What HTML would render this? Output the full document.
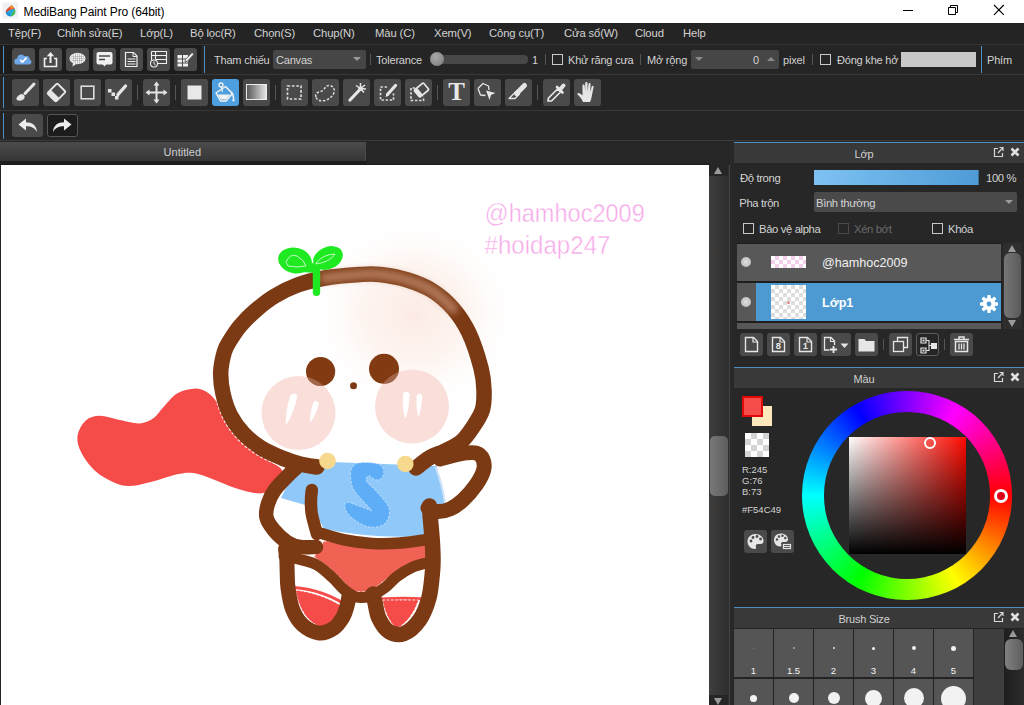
<!DOCTYPE html>
<html><head><meta charset="utf-8">
<style>
*{box-sizing:border-box;margin:0;padding:0}
html,body{width:1024px;height:705px;overflow:hidden;background:#252525;font-family:"Liberation Sans",sans-serif;}
.a{position:absolute}
#title{left:0;top:0;width:1024px;height:23px;background:#fff}
#title .t{left:23.500px;top:4.600px;font-size:12px;color:#000;letter-spacing:-0.12px}
#menu{left:0;top:23px;width:1024px;height:22px;background:#242424}
#menu span{position:absolute;top:4.200px;font-size:11.300px;color:#d2d2d2;white-space:nowrap;letter-spacing:-0.15px}
.btn{position:absolute;background:#4a4a4a;border-radius:3px}
.btn svg{position:absolute;left:0;top:0}
.b1{width:23px;height:23px;top:48px}
.b2{width:27px;height:27px;top:79px}
.lbl{position:absolute;font-size:11px;color:#d2d2d2;white-space:nowrap;letter-spacing:-0.2px}
.sep{position:absolute;width:1px;background:#555}
.hl{position:absolute;left:0;width:1024px;height:1px}
.cb{position:absolute;width:11px;height:11px;border:1px solid #c8c8c8;background:#262626}
</style></head><body>
<div id="title" class="a">
<svg class="a" style="left:2px;top:2px" width="18" height="18" viewBox="0 0 18 18"><defs><linearGradient id="lg1" x1="0" y1="0" x2="1" y2="1"><stop offset="0" stop-color="#ee3b2b"/><stop offset=".35" stop-color="#f08a2a"/><stop offset=".36" stop-color="#2fa7e0"/><stop offset=".6" stop-color="#22b9c9"/><stop offset=".8" stop-color="#3fc04a"/><stop offset="1" stop-color="#8ad03a"/></linearGradient><clipPath id="lc"><path d="M9.500 3C11 4.500 13.500 6.500 13.300 9.800 13 12.800 11 14.200 8.500 14.200 5.800 14.200 3.800 12.500 3.800 10 3.800 7 7.500 5.500 9.500 3Z"/></clipPath></defs><rect x=".5" y=".5" width="15.500" height="16" fill="#f1f1f5"/><g clip-path="url(#lc)"><rect width="18" height="18" fill="#2aa8dc"/><path d="M3 12C6 8 9 7 14 7L14 2 3 2Z" fill="#ef4a2c"/><path d="M7 2L12 2 12 6 9 7Z" fill="#f29a2e"/><path d="M14 6C11 9 10 12 8 15L15 15Z" fill="#3dbf4c"/><path d="M3 10C6 10 9 12 10 15L3 15Z" fill="#1f8fd6"/></g></svg>
<span class="a t">MediBang Paint Pro (64bit)</span>
<svg class="a" style="left:900px;top:0" width="124" height="23" viewBox="0 0 124 23"><path d="M3 10.500h10" stroke="#000" stroke-width="1" fill="none"/><path d="M48.500 7.500h7v7h-7zM50.500 7.500v-2h7v7h-2" stroke="#000" stroke-width="1" fill="none"/><path d="M94 5l9.800 9.800M103.800 5l-9.800 9.800" stroke="#000" stroke-width="1.100" fill="none"/></svg>
</div>
<div id="menu" class="a">
<span style="left:8px">Tệp(F)</span><span style="left:57px">Chỉnh sửa(E)</span><span style="left:140px">Lớp(L)</span><span style="left:190px">Bộ lọc(R)</span><span style="left:254px">Chọn(S)</span><span style="left:313px">Chụp(N)</span><span style="left:375px">Màu (C)</span><span style="left:434px">Xem(V)</span><span style="left:489px">Công cụ(T)</span><span style="left:564px">Cửa sổ(W)</span><span style="left:635px">Cloud</span><span style="left:683px">Help</span>
</div>
<!-- TOOLBARS -->
<div class="a" style="left:0;top:45px;width:1024px;height:96px;background:#252525"></div>
<div class="a" style="left:0;top:45px;width:201px;height:29px;background:#1c1c1c"></div>
<div class="hl" style="top:44px;background:#333"></div>
<div class="hl" style="top:74px;background:#383838"></div>
<div class="hl" style="top:110px;background:#383838"></div>
<div class="hl" style="top:140px;background:#3a3a3a"></div>
<div class="a" style="left:3px;top:46px;width:1px;height:27px;background:#4d8fc4"></div>
<div class="a" style="left:3px;top:77px;width:1px;height:31px;background:#4d8fc4"></div>
<div class="a" style="left:3px;top:113px;width:1px;height:26px;background:#4d8fc4"></div>
<div class="a" style="left:204px;top:46px;width:1px;height:27px;background:#4d8fc4"></div>
<div class="a" style="left:981px;top:46px;width:1px;height:27px;background:#4d8fc4"></div>
<!-- tb1 buttons -->
<div class="btn b1" style="left:12px"><svg width="23" height="23" viewBox="0 0 23 23"><path d="M5.500 16.500a3 3 0 0 1-.3-6 4 4 0 0 1 7.300-2.300 3.600 3.600 0 0 1 5.300 3.300 2.600 2.600 0 0 1-.5 5z" fill="#6ea6e6"/><path d="M8.200 11.800l2.300 2.200 4-4.300" stroke="#fff" stroke-width="1.700" fill="none"/></svg></div>
<div class="btn b1" style="left:39px"><svg width="23" height="23" viewBox="0 0 23 23"><path d="M8 10.500h-2.500v8h12v-8h-2.500" stroke="#f0f0f0" stroke-width="1.600" fill="none"/><path d="M11.500 15v-8" stroke="#f0f0f0" stroke-width="2" fill="none"/><path d="M7.800 8.300l3.700-4.300 3.700 4.300z" fill="#f0f0f0"/></svg></div>
<div class="btn b1" style="left:66px"><svg width="23" height="23" viewBox="0 0 23 23"><ellipse cx="11.500" cy="10.500" rx="8" ry="5.800" fill="#f0f0f0"/><path d="M7 14.500l-.5 4 4.500-3z" fill="#f0f0f0"/><path d="M5 8.500h13M4 10.500h15M5 12.500h13M7.500 6v9M9.500 5v11M11.500 5v11M13.500 5v11M15.500 6v9" stroke="#9a9a9a" stroke-width=".5" fill="none"/></svg></div>
<div class="btn b1" style="left:93px"><svg width="23" height="23" viewBox="0 0 23 23"><rect x="3.500" y="4" width="16" height="12.500" rx="2" fill="#f0f0f0"/><path d="M9.500 16l2 2.500 2-2.500z" fill="#f0f0f0"/><path d="M6 8h11M6 11.500h6" stroke="#4a4a4a" stroke-width="1.600" fill="none"/></svg></div>
<div class="btn b1" style="left:120px"><svg width="23" height="23" viewBox="0 0 23 23"><path d="M5.500 4.500h8l3.500 3.500v10.500h-11.500z" stroke="#f0f0f0" stroke-width="1.200" fill="none"/><path d="M13 4.500v4h4" stroke="#f0f0f0" stroke-width="1" fill="none"/><path d="M7.500 11h8M7.500 13.500h8M7.500 16h8" stroke="#f0f0f0" stroke-width="1.100" fill="none"/></svg></div>
<div class="btn b1" style="left:147px"><svg width="23" height="23" viewBox="0 0 23 23"><path d="M4.500 3.500h15v12h-9M4.500 3.500v8.500M4.500 7.500h15M8.500 3.500v8M9 11.500h10.500" stroke="#f0f0f0" stroke-width="1.100" fill="none"/><circle cx="7" cy="15.500" r="3.500" stroke="#f0f0f0" stroke-width="1.100" fill="#4a4a4a"/><path d="M7 13.500v2.200l1.500 1" stroke="#f0f0f0" stroke-width="1" fill="none"/></svg></div>
<div class="btn b1" style="left:174px"><svg width="23" height="23" viewBox="0 0 23 23"><path d="M3.500 7h4.500v3.500h-4.500zM9 7h5v3.500h-5zM3.500 11.500h4.500v3h-4.500zM9 11.500h5v3h-5zM3.500 15.500h4.500v3h-4.500zM9 15.500h5v3h-5z" fill="#f0f0f0"/><path d="M11.500 11.500l6.500-7 2 1.700-6.500 7-2.500.8z" fill="#f0f0f0" stroke="#4a4a4a" stroke-width=".8"/></svg></div>
<!-- tb1 option widgets -->
<span class="lbl" style="left:214px;top:54px">Tham chiếu</span>
<div class="a" style="left:273px;top:50px;width:93px;height:19px;background:#464646;border-radius:2px"></div>
<span class="lbl" style="left:276px;top:54px">Canvas</span>
<div class="a" style="left:353px;top:57px;width:0;height:0;border-left:4px solid transparent;border-right:4px solid transparent;border-top:4px solid #9a9a9a"></div>
<div class="sep" style="left:370px;top:54px;height:11px"></div>
<span class="lbl" style="left:376px;top:54px">Tolerance</span>
<div class="a" style="left:432px;top:55px;width:96px;height:9px;background:#474747;border-radius:4px"></div>
<div class="a" style="left:430px;top:52px;width:14px;height:14px;background:radial-gradient(circle at 40% 35%,#a8a8a8,#7a7a7a);border-radius:7px"></div>
<span class="lbl" style="left:532px;top:54px">1</span>
<div class="sep" style="left:545px;top:54px;height:11px"></div>
<div class="cb" style="left:552px;top:54px"></div>
<span class="lbl" style="left:568px;top:54px">Khử răng cưa</span>
<div class="sep" style="left:640px;top:54px;height:11px"></div>
<span class="lbl" style="left:647px;top:54px">Mở rộng</span>
<div class="a" style="left:691px;top:50px;width:88px;height:19px;background:#464646;border-radius:2px"></div>
<div class="a" style="left:695px;top:57px;width:0;height:0;border-left:4px solid transparent;border-right:4px solid transparent;border-top:4px solid #8a8a8a"></div>
<div class="a" style="left:767px;top:57px;width:0;height:0;border-left:4px solid transparent;border-right:4px solid transparent;border-bottom:4px solid #8a8a8a"></div>
<span class="lbl" style="left:753px;top:54px">0</span>
<span class="lbl" style="left:783px;top:54px">pixel</span>
<div class="sep" style="left:812px;top:54px;height:11px"></div>
<div class="cb" style="left:820px;top:54px"></div>
<span class="lbl" style="left:837px;top:54px">Đóng khe hở</span>
<div class="a" style="left:901px;top:52px;width:75px;height:15px;background:#c8c8c8"></div>
<span class="lbl" style="left:987px;top:54px">Phím</span>
<!-- tb2 buttons -->
<div class="btn b2" style="left:12px"><svg width="27" height="27" viewBox="0 0 27 27"><path d="M13 14.500l9-9.500" stroke="#e6e6e6" stroke-width="3" stroke-linecap="round" fill="none"/><path d="M4.500 20.500c-.5-2 2-5 5.500-5.500 2 .5 3 2 2.500 4-1.500 3-6 3.500-8 1.500z" fill="#e6e6e6"/></svg></div>
<div class="btn b2" style="left:43px"><svg width="27" height="27" viewBox="0 0 27 27"><g transform="rotate(-45 13.500 13.500)"><rect x="6.500" y="7.500" width="14" height="12" rx="1.200" fill="none" stroke="#e6e6e6" stroke-width="2"/><rect x="6.500" y="7.500" width="5" height="12" rx="1" fill="#e6e6e6"/></g></svg></div>
<div class="btn b2" style="left:74px"><svg width="27" height="27" viewBox="0 0 27 27"><rect x="7.200" y="7.200" width="12.600" height="12.600" fill="none" stroke="#dcdcdc" stroke-width="1.600"/></svg></div>
<div class="btn b2" style="left:105px"><svg width="27" height="27" viewBox="0 0 27 27"><path d="M3 10h3.500v3.500h-3.500zM6.500 13.500h3.500v3.500h-3.500zM10 17h3.500v3.500h-3.500z" fill="#e6e6e6"/><path d="M13 15.500l7.500-8.500" stroke="#e6e6e6" stroke-width="3.400" stroke-linecap="round" fill="none"/><path d="M11 18.500l1-3.500 2.500 2z" fill="#e6e6e6"/></svg></div>
<div class="sep" style="left:137px;top:85px;height:15px"></div>
<div class="btn b2" style="left:143px"><svg width="27" height="27" viewBox="0 0 27 27"><path d="M13.500 5v17M5 13.500h17" stroke="#e6e6e6" stroke-width="2" fill="none"/><path d="M13.500 2.500l3 4h-6zM13.500 24.500l3-4h-6zM2.500 13.500l4-3v6zM24.500 13.500l-4-3v6z" fill="#e6e6e6"/></svg></div>
<div class="sep" style="left:175px;top:85px;height:15px"></div>
<div class="btn b2" style="left:181px"><svg width="27" height="27" viewBox="0 0 27 27"><rect x="6.500" y="6.500" width="14" height="14" fill="#e8e8e8"/></svg></div>
<div class="btn b2" style="left:212px;background:#4d9fe0"><svg width="27" height="27" viewBox="0 0 27 27"><path d="M4 14l9.500-6.500 7 7-6.500 7.500h-5.500z" fill="none" stroke="#f2f2f2" stroke-width="1.500" stroke-linejoin="round"/><path d="M5.500 15.500h13l-4.500 5h-5z" fill="#f2f2f2"/><circle cx="9" cy="6" r="2" fill="none" stroke="#f2f2f2" stroke-width="1.300"/><path d="M9.500 8l1 5" stroke="#f2f2f2" stroke-width="1.200" fill="none"/><path d="M19 13.500c2 1 2.500 3 2.500 6" stroke="#f2f2f2" stroke-width="1.500" fill="none"/><path d="M21.500 18.500c-1.500 2-1.500 4 0 4s1.500-2 0-4z" fill="#f2f2f2"/></svg></div>
<div class="btn b2" style="left:243px"><svg width="27" height="27" viewBox="0 0 27 27"><defs><linearGradient id="gr1" x1="0" x2="1" y1="0" y2="0"><stop offset="0" stop-color="#555"/><stop offset="1" stop-color="#e8e8e8"/></linearGradient></defs><rect x="3.500" y="5.500" width="20" height="15" fill="url(#gr1)" stroke="#ececec" stroke-width="1"/></svg></div>
<div class="sep" style="left:275px;top:85px;height:15px"></div>
<div class="btn b2" style="left:281px"><svg width="27" height="27" viewBox="0 0 27 27"><rect x="6.500" y="7" width="13.500" height="13" fill="none" stroke="#dcdcdc" stroke-width="1.700" stroke-dasharray="2.600 1.800"/></svg></div>
<div class="btn b2" style="left:312px"><svg width="27" height="27" viewBox="0 0 27 27"><path d="M4 18c-1.500-4 3-5 6-6 3-1.500 3-5.500 7-5.500 4 0 6 3.500 5 7-1 3.500-4.500 6.500-9 8-4 1-8 0-9-3.500z" fill="none" stroke="#dcdcdc" stroke-width="1.500" stroke-dasharray="2.400 1.700"/></svg></div>
<div class="btn b2" style="left:343px"><svg width="27" height="27" viewBox="0 0 27 27"><path d="M7 21l9-9.500" stroke="#e6e6e6" stroke-width="3.200" stroke-linecap="round" fill="none"/><path d="M17.500 9.500l0-5.500M17.500 9.500l4.500-3.500M17.500 9.500l5.500 .5M17.500 9.500l3.500 4M17.500 9.500l-4.500-3" stroke="#e6e6e6" stroke-width="1.500" fill="none"/><circle cx="17.500" cy="9.800" r="2.300" fill="#e6e6e6"/></svg></div>
<div class="btn b2" style="left:374px"><svg width="27" height="27" viewBox="0 0 27 27"><path d="M13 8h-6.500v13h13v-6.500" fill="none" stroke="#dcdcdc" stroke-width="1.700" stroke-dasharray="2.400 1.700"/><path d="M13.500 15.500l8-9" stroke="#e6e6e6" stroke-width="3.200" stroke-linecap="round" fill="none"/><path d="M11.500 18l1-3.500 2.500 2z" fill="#e6e6e6"/></svg></div>
<div class="btn b2" style="left:405px"><svg width="27" height="27" viewBox="0 0 27 27"><path d="M10 9h-4v12.500h12.500v-4" fill="none" stroke="#dcdcdc" stroke-width="1.700" stroke-dasharray="2.400 1.700"/><g transform="rotate(-40 16.500 11)"><rect x="10.500" y="6.500" width="12" height="9" rx="1" fill="none" stroke="#e6e6e6" stroke-width="1.700"/><rect x="10.500" y="6.500" width="4" height="9" rx="1" fill="#e6e6e6"/></g></svg></div>
<div class="sep" style="left:437px;top:85px;height:15px"></div>
<div class="btn b2" style="left:443px"><span style="position:absolute;left:3px;top:-1px;width:21px;text-align:center;font-family:'Liberation Serif',serif;font-weight:bold;font-size:25px;line-height:27px;color:#e8e8e8">T</span></div>
<div class="btn b2" style="left:474px"><svg width="27" height="27" viewBox="0 0 27 27"><path d="M4 9.500l5-5 5.500 2.500.5 4M4 9.500l2.500 6.500 5 .5" fill="none" stroke="#e6e6e6" stroke-width="1.300" stroke-linejoin="round"/><path d="M12 11.500l9.500 2.500-4.500 2-1.500 5z" fill="#e6e6e6"/></svg></div>
<div class="btn b2" style="left:505px"><svg width="27" height="27" viewBox="0 0 27 27"><path d="M11.500 14.500l8-8" stroke="#e6e6e6" stroke-width="5" stroke-linecap="round" fill="none"/><path d="M4 19.500l7.500-7.500 3 3-4.500 4.500z" fill="none" stroke="#e6e6e6" stroke-width="1.300" stroke-linejoin="round"/></svg></div>
<div class="sep" style="left:537px;top:85px;height:15px"></div>
<div class="btn b2" style="left:543px"><svg width="27" height="27" viewBox="0 0 27 27"><path d="M5 22l.5-3 9-9 3 3-9 9z" fill="none" stroke="#e6e6e6" stroke-width="1.700" stroke-linejoin="round"/><path d="M14 8l5.500 5.500" stroke="#e6e6e6" stroke-width="2.600" stroke-linecap="round" fill="none"/><path d="M17 10.500l3.500-4" stroke="#e6e6e6" stroke-width="4" stroke-linecap="round" fill="none"/></svg></div>
<div class="btn b2" style="left:574px"><svg width="27" height="27" viewBox="0 0 27 27"><path d="M9 23c-1-3-3-5-5.500-7.500-.5-1.500 1-2 2.500-1l2.500 2v-10c0-1.500 2-1.500 2.200 0l.5 6v-8.500c.1-1.500 2.100-1.500 2.300 0l.2 8.500 .8-7.500c.2-1.400 2.100-1.200 2.100 .2l-.4 7.800 1.500-5.500c.5-1.300 2.100-.8 1.900 .5l-1.600 8c-.5 3-1 5-2 7z" fill="#e6e6e6"/></svg></div>
<!-- tb3 -->
<div class="btn" style="left:12px;top:114px;width:31px;height:23px"><svg width="31" height="23" viewBox="0 0 31 23"><path d="M6.500 10.500l7.500-6v3.800c6 0 10.500 3 11 9.700-2-4-5.500-5.800-11-5.800v4.300z" fill="#ececec"/></svg></div>
<div class="btn" style="left:47px;top:114px;width:31px;height:23px;background:#1c1c1c;border:1px solid #555"><svg style="left:-1px;top:-1px" width="31" height="23" viewBox="0 0 31 23"><path d="M24.500 10.500l-7.500-6v3.800c-6 0-10.500 3-11 9.700 2-4 5.500-5.800 11-5.800v4.300z" fill="#ececec"/></svg></div>
<!-- TABBAR -->
<div class="a" style="left:0;top:141px;width:732px;height:24px;background:#262626"></div>
<div class="a" style="left:0;top:142px;width:366px;height:19px;background:linear-gradient(#4b4b4b,#363636);border-right:1px solid #4a4a4a"></div>
<div class="a" style="left:0;top:161px;width:367px;height:3px;background:#1f1f1f"></div><div class="a" style="left:0;top:164px;width:710px;height:1px;background:#1a1a1a"></div>
<span class="lbl" style="left:163.500px;top:146px;color:#cfcfcf;letter-spacing:0.05px">Untitled</span>
<!-- canvas vscroll -->
<div class="a" style="left:709px;top:165px;width:20px;height:540px;background:linear-gradient(90deg,#3f3e3d,#2f2e2e)"></div>
<div class="a" style="left:709px;top:165px;width:19px;height:11px;background:#262626"></div>
<div class="a" style="left:709px;top:695px;width:19px;height:10px;background:#262626"></div>
<div class="a" style="left:714px;top:167px;width:0;height:0;border-left:4.500px solid transparent;border-right:4.500px solid transparent;border-bottom:7px solid #9a9a9a"></div>
<div class="a" style="left:714px;top:697.500px;width:0;height:0;border-left:4.500px solid transparent;border-right:4.500px solid transparent;border-top:7px solid #9a9a9a"></div>
<div class="a" style="left:710px;top:436px;width:18px;height:60px;background:linear-gradient(90deg,#787878,#5e5e5e);border-radius:5px"></div>
<div class="a" style="left:729px;top:165px;width:1px;height:540px;background:#454545"></div>
<!-- CANVAS -->
<div class="a" style="left:1px;top:165px;width:708px;height:540px;background:#fff;overflow:hidden">
<svg class="a" style="left:-1px;top:-165px" width="1024" height="705" viewBox="0 0 1024 705">
<defs><radialGradient id="glow"><stop offset="0" stop-color="#fbe2d8" stop-opacity=".7"/><stop offset=".5" stop-color="#fbe6dc" stop-opacity=".4"/><stop offset="1" stop-color="#fff" stop-opacity="0"/></radialGradient><radialGradient id="hl"><stop offset="0" stop-color="#c9947a" stop-opacity=".9"/><stop offset="1" stop-color="#c9947a" stop-opacity="0"/></radialGradient><clipPath id="headclip"><path id="hc" d=""/></clipPath></defs>
<ellipse cx="414" cy="314" rx="108" ry="100" fill="url(#glow)"/>
<path d="M214.7,399.3C211.4,395.3 208.5,392.8 205.0,391.0C201.5,389.2 198.3,388.3 193.6,388.7C188.9,389.1 182.1,390.3 177.0,393.4C171.9,396.5 166.9,403.4 163.0,407.5C159.1,411.6 157.6,415.4 153.7,418.0C149.8,420.6 145.5,423.1 139.7,423.4C133.8,423.7 125.2,421.0 118.6,419.7C111.9,418.4 105.3,415.6 99.8,415.7C94.3,415.8 89.5,417.1 85.8,420.4C82.1,423.7 78.4,430.3 77.6,435.6C76.8,440.9 78.1,446.1 81.0,452.0C83.9,457.9 89.5,465.7 95.0,470.8C100.5,475.9 108.1,480.0 114.0,482.5C119.9,485.0 123.7,486.2 130.3,486.0C136.9,485.8 145.9,483.2 153.7,481.3C161.5,479.4 170.3,475.7 177.0,474.3C183.7,472.9 187.7,472.2 193.6,473.0C199.5,473.8 205.3,476.4 212.3,479.0C219.3,481.6 228.8,486.0 235.8,488.3C242.8,490.6 249.5,492.4 254.5,493.0C259.5,493.6 262.6,493.8 266.0,492.0C269.4,490.2 272.3,485.7 275.0,482.0C277.7,478.3 284.5,474.5 282.0,470.0C279.5,465.5 267.0,460.8 260.0,455.0C253.0,449.2 245.8,441.7 240.0,435.0C234.2,428.3 229.2,420.9 225.0,415.0C220.8,409.1 218.0,403.3 214.7,399.3Z" fill="#f54c49"/>
<path d="M304,461 L437,466 L446,509 L426,506 L427,536 Q372,539 324,529 L312,507 L281,498 Q290,478 304,461Z" fill="#90c9f9"/>
<path d="M350.4,474.2C350.2,470.8 351.1,469.7 352.0,468.0C352.9,466.3 353.8,464.9 355.5,464.0C357.2,463.1 359.9,462.8 362.0,462.6C364.1,462.4 366.1,462.5 368.3,462.6C370.5,462.7 373.1,462.9 375.0,463.2C376.9,463.5 378.4,463.9 379.7,464.7C381.0,465.5 382.3,466.8 383.0,468.0C383.7,469.2 383.9,470.4 383.8,472.0C383.7,473.6 383.4,476.1 382.3,477.4C381.2,478.7 378.9,479.9 377.2,480.0C375.5,480.1 373.3,478.7 372.0,478.0C370.7,477.3 370.4,476.1 369.5,476.0C368.6,475.9 367.0,476.4 366.6,477.4C366.2,478.4 365.7,479.9 367.0,481.9C368.3,483.9 371.8,486.5 374.6,489.5C377.4,492.5 381.2,496.5 383.6,499.7C386.1,502.9 388.6,505.5 389.3,508.7C390.0,511.9 389.4,516.0 388.0,518.9C386.6,521.8 384.3,524.6 381.0,525.9C377.7,527.2 372.3,527.5 368.3,526.8C364.3,526.0 360.2,523.6 356.8,521.4C353.4,519.2 349.9,516.3 347.9,513.8C345.9,511.2 344.8,508.0 344.7,506.1C344.6,504.2 345.4,502.5 347.2,502.3C349.0,502.1 352.4,503.8 355.5,504.8C358.6,505.9 363.3,507.7 366.0,508.6C368.7,509.5 372.2,511.8 371.5,510.3C370.8,508.8 365.0,503.4 361.9,499.7C358.8,496.0 354.9,492.6 353.0,488.3C351.1,484.1 350.6,477.6 350.4,474.2Z" fill="#5eaef7"/>
<path d="M350.4,474.2C350.2,470.8 351.1,469.7 352.0,468.0C352.9,466.3 353.8,464.9 355.5,464.0C357.2,463.1 359.9,462.8 362.0,462.6C364.1,462.4 366.1,462.5 368.3,462.6C370.5,462.7 373.1,462.9 375.0,463.2C376.9,463.5 378.4,463.9 379.7,464.7C381.0,465.5 382.3,466.8 383.0,468.0C383.7,469.2 383.9,470.4 383.8,472.0C383.7,473.6 383.4,476.1 382.3,477.4C381.2,478.7 378.9,479.9 377.2,480.0C375.5,480.1 373.3,478.7 372.0,478.0C370.7,477.3 370.4,476.1 369.5,476.0C368.6,475.9 367.0,476.4 366.6,477.4C366.2,478.4 365.7,479.9 367.0,481.9C368.3,483.9 371.8,486.5 374.6,489.5C377.4,492.5 381.2,496.5 383.6,499.7C386.1,502.9 388.6,505.5 389.3,508.7C390.0,511.9 389.4,516.0 388.0,518.9C386.6,521.8 384.3,524.6 381.0,525.9C377.7,527.2 372.3,527.5 368.3,526.8C364.3,526.0 360.2,523.6 356.8,521.4C353.4,519.2 349.9,516.3 347.9,513.8C345.9,511.2 344.8,508.0 344.7,506.1C344.6,504.2 345.4,502.5 347.2,502.3C349.0,502.1 352.4,503.8 355.5,504.8C358.6,505.9 363.3,507.7 366.0,508.6C368.7,509.5 372.2,511.8 371.5,510.3C370.8,508.8 365.0,503.4 361.9,499.7C358.8,496.0 354.9,492.6 353.0,488.3C351.1,484.1 350.6,477.6 350.4,474.2Z" fill="none" stroke="#e8f3ff" stroke-width=".8" stroke-dasharray="2.200 1.800" opacity=".8"/>
<path d="M324,541 L427,541 L428,560 Q400,568 380,584 Q366,596 350,590 Q338,572 314,557Z" fill="#f06253"/>
<path d="M295.500,590 Q320,593 342,606 Q338,622 321,627 Q301,620 295.500,590Z" fill="#f54c49"/>
<path d="M293,587.600 Q325,589.500 351,608.600" fill="none" stroke="#f54c49" stroke-width="3" stroke-linecap="round"/>
<path d="M382.500,600 L418.500,600 Q412,620 397,628.500 Q386,620 382.500,600Z" fill="#f54c49"/>
<path d="M381,599 Q403,597.500 425.500,599" fill="none" stroke="#f54c49" stroke-width="3" stroke-linecap="round"/>
<path d="M324,541 L427,541 L428,560 Q400,568 380,584 Q366,596 350,590 Q338,572 314,557Z" fill="none" stroke="#fff" stroke-width="1" stroke-dasharray="2.500 1.800" opacity=".85"/>
<path d="M295.500,590 Q320,593 342,606 Q338,622 321,627 Q301,620 295.500,590Z" fill="none" stroke="#fff" stroke-width="1" stroke-dasharray="2.500 1.800" opacity=".85"/>
<path d="M382.500,600 L418.500,600 Q412,620 397,628.500 Q386,620 382.500,600Z" fill="none" stroke="#fff" stroke-width="1" stroke-dasharray="2.500 1.800" opacity=".85"/>
<circle cx="298.500" cy="413" r="37" fill="#fadeda"/>
<circle cx="412" cy="406.500" r="37" fill="#fadeda"/>
<circle cx="320.600" cy="371.500" r="14.600" fill="#813a11"/>
<circle cx="384" cy="368.800" r="15" fill="#813a11"/>
<clipPath id="e1"><circle cx="320.600" cy="371.500" r="14.600"/></clipPath><clipPath id="e2"><circle cx="384" cy="368.800" r="15"/></clipPath>
<circle cx="298.500" cy="413" r="37" fill="#c08a78" opacity=".55" clip-path="url(#e1)"/>
<circle cx="412" cy="406.500" r="37" fill="#c08a78" opacity=".55" clip-path="url(#e2)"/>
<circle cx="353.500" cy="385.800" r="3.500" fill="#7c3a14"/>
<path d="M291,396 Q294,392.500 296.500,396 Q294,410 286.500,423 Q287,408 291,396Z M314,403 Q316,400.500 318,403.500 Q316,413 310.500,421 Q311,411 314,403Z" fill="#fff" stroke="#fff" stroke-width="1.600" stroke-linejoin="round"/>
<path d="M404,394 Q406.500,390.500 409,394.500 Q408.500,406 405.500,417 Q402.500,406 404,394Z M417.500,396 Q419.500,393 421.500,396.500 Q421,406 418.500,415 Q416.500,406 417.500,396Z" fill="#fff" stroke="#fff" stroke-width="1.600" stroke-linejoin="round"/>
<path d="M290.0,461.0C288.7,460.5 286.9,460.2 282.0,458.0C277.1,455.8 267.0,451.7 260.5,447.5C254.0,443.3 248.0,438.4 243.0,433.0C238.0,427.6 233.6,421.5 230.3,415.0C227.0,408.5 224.6,399.6 223.0,393.8C221.4,388.0 221.3,382.3 221.0,380.0" fill="none" stroke="#fff" stroke-width="17.500" stroke-dasharray="2.500 1.800" opacity=".9"/>
<path d="M437,466 L470,458 L478,470 L470,490 L446,508Z" fill="#fff"/>
<path d="M435.500,467 Q443,485 445.500,507" fill="none" stroke="#cfe3f8" stroke-width="2"/>
<path d="M317.0,467.0C314.2,466.5 305.8,465.5 300.0,464.0C294.2,462.5 288.6,460.8 282.0,458.0C275.4,455.2 267.0,451.7 260.5,447.5C254.0,443.3 248.0,438.4 243.0,433.0C238.0,427.6 233.6,421.5 230.3,415.0C227.0,408.5 224.6,400.9 223.0,393.8C221.4,386.7 220.5,379.5 220.7,372.5C220.9,365.5 222.8,357.3 224.3,352.0C225.9,346.7 227.3,344.9 230.0,340.5C232.7,336.1 236.2,330.5 240.5,325.5C244.8,320.5 249.9,315.3 255.5,310.5C261.1,305.7 267.0,300.8 274.0,296.5C281.0,292.2 289.0,288.1 297.5,285.0C306.0,281.9 314.6,279.8 325.0,278.0C335.4,276.2 350.8,275.1 360.0,274.5C369.2,273.9 372.1,273.6 380.0,274.5C387.9,275.4 398.8,277.3 407.5,280.0C416.2,282.7 424.4,285.8 432.0,290.5C439.6,295.2 446.8,301.4 453.0,308.5C459.2,315.6 464.3,323.1 469.0,333.0C473.7,342.9 478.5,358.5 481.0,368.0C483.5,377.5 483.8,383.1 484.0,390.0C484.2,396.9 484.3,403.3 482.5,409.5C480.7,415.7 476.6,421.6 473.0,427.0C469.4,432.4 465.7,438.0 461.0,442.0C456.3,446.0 450.2,448.4 445.0,451.0C439.8,453.6 434.8,454.7 430.0,457.5C425.2,460.3 418.3,466.2 416.0,468.0" fill="none" stroke="#7c3a14" stroke-width="15.500" stroke-linecap="round" stroke-linejoin="round"/>
<path d="M325.0,278.0C330.8,277.4 350.8,275.1 360.0,274.5C369.2,273.9 372.1,273.6 380.0,274.5C387.9,275.4 398.8,277.3 407.5,280.0C416.2,282.7 424.4,285.8 432.0,290.5C439.6,295.2 449.5,305.5 453.0,308.5" fill="none" stroke="#c48f72" stroke-width="10.500" stroke-linecap="round" opacity=".7" filter="url(#blur3)"/>
<filter id="blur3" x="-20%" y="-50%" width="140%" height="200%"><feGaussianBlur stdDeviation="3"/></filter>
<path d="M296.0,468.0C294.6,469.3 291.1,472.3 287.5,476.0C283.9,479.7 277.9,485.4 274.7,490.0C271.4,494.6 269.4,499.0 268.0,503.6C266.6,508.2 265.5,513.0 266.5,517.4C267.5,521.8 270.4,525.9 273.8,530.0C277.2,534.1 282.6,539.2 287.0,542.0C291.4,544.8 295.2,546.2 300.0,547.0C304.8,547.8 313.3,547.0 316.0,547.0" fill="none" stroke="#7c3a14" stroke-width="14.500" stroke-linecap="round" stroke-linejoin="round"/>
<path d="M311.8,490.0C311.7,491.7 311.0,496.0 311.0,500.0C311.0,504.0 310.8,508.3 311.8,514.0C312.8,519.7 316.1,530.7 317.0,534.0" fill="none" stroke="#7c3a14" stroke-width="12.500" stroke-linecap="round"/>
<path d="M440.0,459.0C443.2,458.2 453.0,455.0 459.0,454.0C465.0,453.0 472.0,452.1 476.0,453.0C480.0,453.9 481.8,456.6 483.0,459.5C484.2,462.4 484.7,466.4 483.5,470.6C482.3,474.9 479.4,480.1 476.0,485.0C472.6,489.9 467.3,496.0 463.0,500.0C458.7,504.0 454.3,507.1 450.0,509.0C445.7,510.9 440.7,511.7 437.0,511.5C433.3,511.3 429.5,508.6 428.0,508.0" fill="none" stroke="#7c3a14" stroke-width="15" stroke-linecap="round" stroke-linejoin="round"/>
<path d="M429.5,506.0C429.7,508.3 430.0,514.1 430.5,520.0C431.0,525.9 431.9,534.8 432.3,541.5C432.7,548.2 433.0,554.4 433.0,560.0C433.0,565.6 432.9,568.6 432.2,575.0C431.5,581.4 430.9,591.0 428.8,598.5C426.7,606.0 423.6,614.2 419.5,620.0C415.4,625.8 409.1,631.6 404.0,633.5C398.9,635.4 393.2,634.2 389.0,631.6C384.8,629.0 381.1,622.9 378.8,618.0C376.5,613.1 376.0,606.4 375.0,602.4C374.0,598.4 373.3,595.4 373.0,594.0" fill="none" stroke="#7c3a14" stroke-width="15.500" stroke-linecap="round" stroke-linejoin="round"/>
<path d="M285.5,549.0C285.7,550.3 286.4,553.2 286.7,557.0C287.0,560.8 287.0,566.8 287.2,572.0C287.4,577.2 287.1,581.8 288.0,588.0C288.9,594.2 290.2,603.2 292.6,609.4C295.1,615.6 298.3,621.1 302.7,625.0C307.1,628.9 313.8,632.5 319.0,633.0C324.2,633.5 330.0,630.7 334.0,628.0C338.0,625.3 340.8,620.7 343.0,617.0C345.2,613.3 346.0,609.5 347.0,606.0C348.0,602.5 348.7,597.7 349.0,596.0" fill="none" stroke="#7c3a14" stroke-width="15" stroke-linecap="round" stroke-linejoin="round"/>
<path d="M320.0,533.0C324.2,534.2 336.3,538.2 345.0,540.0C353.7,541.8 362.8,543.0 372.0,543.5C381.2,544.0 390.3,543.8 400.0,543.0C409.7,542.2 425.0,539.7 430.0,539.0" fill="none" stroke="#7c3a14" stroke-width="11.500" stroke-linecap="round"/>
<path d="M284.0,556.0C286.7,556.6 294.5,558.0 300.0,559.5C305.5,561.0 311.4,562.0 316.8,565.0C322.2,568.0 327.9,573.4 332.4,577.5C336.9,581.6 340.1,586.2 344.0,589.5C347.9,592.8 351.7,595.9 356.0,597.0C360.3,598.1 365.2,597.6 370.0,596.0C374.8,594.4 380.5,590.8 385.0,587.5C389.5,584.2 392.4,579.9 397.0,576.5C401.6,573.1 407.6,569.5 412.4,567.3C417.2,565.0 423.7,563.7 426.0,563.0" fill="none" stroke="#7c3a14" stroke-width="11" stroke-linecap="round" stroke-linejoin="round"/>
<circle cx="327.500" cy="461" r="8.300" fill="#f6d98c"/>
<circle cx="405.300" cy="464" r="8.300" fill="#f6d98c"/>
<g fill="#1fe921"><ellipse cx="295" cy="260.500" rx="17" ry="12.800" transform="rotate(12 295 260.500)"/><path d="M300,255 L317,266 L317,273 L300,272Z"/><ellipse cx="328" cy="258" rx="15.500" ry="11" transform="rotate(-24 328 258)"/><rect x="312.800" y="262" width="7.400" height="34" rx="3.700"/></g>
<path d="M286,262 Q290,253 297,256 Q304,260 306,266 Q296,268 288,266Z" fill="none" stroke="#fff" stroke-width=".8" opacity=".9"/>
<path d="M316,263 Q324,254 335,254 Q330,262 316,264Z" fill="none" stroke="#fff" stroke-width=".8" opacity=".9"/>
<g font-family="Liberation Sans" font-size="25" fill="#f7a8e8" stroke="#fff" stroke-width=".45"><text x="484.800" y="222.200" textLength="160" lengthAdjust="spacingAndGlyphs">@hamhoc2009</text><text x="484.500" y="253.800" textLength="126" lengthAdjust="spacingAndGlyphs">#hoidap247</text></g>
</svg></div>
<!-- RIGHT PANELS -->
<style>
.ph{position:absolute;left:734px;width:290px;height:20px;background:#393939;border-top:1px solid #4d8fc4;box-sizing:content-box}
.ph span{position:absolute;left:0;width:260px;text-align:center;top:5px;font-size:11px;color:#d0d0d0;letter-spacing:-0.2px}
.pb{position:absolute;left:734px;width:290px;background:#272727}
.pbtn{position:absolute;width:23px;height:23px;background:#4a4a4a;border-radius:3px}
</style>
<div class="a" style="left:730px;top:141px;width:294px;height:564px;background:#282828"></div>
<!-- Layer panel -->
<div class="ph" style="top:142px"><span>Lớp</span></div>
<div class="pb" style="top:163px;height:197px"></div>
<svg class="a" style="left:992px;top:145px" width="30" height="14" viewBox="0 0 30 14"><path d="M6 3.500h-3.500v8h8v-3.500" stroke="#d8d8d8" stroke-width="1.200" fill="none"/><path d="M6 8l5-5.500M7.500 2.500h3.500v3.500" stroke="#d8d8d8" stroke-width="1.200" fill="none"/><path d="M19.500 3.500l7 7M26.500 3.500l-7 7" stroke="#e2e2e2" stroke-width="2.600" fill="none"/></svg>
<span class="lbl" style="left:740px;top:172px;font-size:11.300px;letter-spacing:-0.38px">Độ trong</span>
<div class="a" style="left:814px;top:170px;width:165px;height:15px;background:linear-gradient(90deg,#7dc2f3,#4f9bd6);border-right:1px solid #3a6f9c"></div>
<span class="lbl" style="left:986px;top:172px;font-size:11.300px;letter-spacing:-0.38px">100 %</span>
<span class="lbl" style="left:739.300px;top:197px;font-size:11.300px;letter-spacing:-0.38px">Pha trộn</span>
<div class="a" style="left:814px;top:191.700px;width:203px;height:20.300px;background:#4a4a4a;border-radius:2px"></div>
<span class="lbl" style="left:816px;top:197px;font-size:11.300px;letter-spacing:-0.38px">Bình thường</span>
<div class="a" style="left:1005px;top:200px;width:0;height:0;border-left:4px solid transparent;border-right:4px solid transparent;border-top:4.500px solid #9a9a9a"></div>
<div class="cb" style="left:743px;top:223px"></div><span class="lbl" style="left:759px;top:223px;font-size:11.300px;letter-spacing:-0.38px">Bảo vệ alpha</span>
<div class="cb" style="left:838px;top:223px;border-color:#4a4a4a"></div><span class="lbl" style="left:854px;top:223px;font-size:11.300px;letter-spacing:-0.38px;color:#6a6a6a">Xén bớt</span>
<div class="cb" style="left:932px;top:223px"></div><span class="lbl" style="left:948px;top:223px;font-size:11.300px;letter-spacing:-0.38px">Khóa</span>
<!-- layer list -->
<div class="a" style="left:737px;top:243px;width:264px;height:86px;background:#1e1e1e"></div>
<div class="a" style="left:737px;top:244px;width:264px;height:37px;background:#585858"></div>
<div class="a" style="left:737px;top:283px;width:264px;height:38px;background:#585858"></div>
<div class="a" style="left:756px;top:283px;width:245px;height:38px;background:#4d9ad3"></div>
<div class="a" style="left:737px;top:323px;width:264px;height:6px;background:#585858"></div>
<div class="a" style="left:741px;top:257px;width:10px;height:10px;border-radius:5px;background:radial-gradient(#e0e0e0,#b0b0b0)"></div>
<div class="a" style="left:741px;top:297px;width:10px;height:10px;border-radius:5px;background:radial-gradient(#e0e0e0,#b0b0b0)"></div>
<div class="a" style="left:771px;top:256px;width:34.500px;height:12px;background-color:#fff;background-image:linear-gradient(45deg,#f6d0ea 25%,transparent 25%,transparent 75%,#f6d0ea 75%),linear-gradient(45deg,#f6d0ea 25%,transparent 25%,transparent 75%,#f6d0ea 75%);background-size:8px 8px;background-position:0 0,4px 4px"></div>
<div class="a" style="left:771px;top:285px;width:34.500px;height:34px;background-color:#fff;background-image:linear-gradient(45deg,#ddd 25%,transparent 25%,transparent 75%,#ddd 75%),linear-gradient(45deg,#ddd 25%,transparent 25%,transparent 75%,#ddd 75%);background-size:8px 8px;background-position:0 0,4px 4px"></div>
<div class="a" style="left:787px;top:301px;width:3px;height:3px;background:#d88;border-radius:2px"></div>
<span class="lbl" style="left:822px;top:255.500px;font-size:12.600px;color:#f0f0f0;letter-spacing:0">@hamhoc2009</span>
<span class="lbl" style="left:822px;top:295.500px;font-size:12.600px;color:#fff;font-weight:bold;letter-spacing:0">Lớp1</span>
<svg class="a" style="left:979px;top:293.500px" width="20" height="20" viewBox="0 0 20 20"><g fill="#fff"><circle cx="10" cy="10" r="6.200"/><g id="tooth"><rect x="8.300" y="1" width="3.400" height="18" rx=".8"/></g><rect x="8.300" y="1" width="3.400" height="18" rx=".8" transform="rotate(45 10 10)"/><rect x="8.300" y="1" width="3.400" height="18" rx=".8" transform="rotate(90 10 10)"/><rect x="8.300" y="1" width="3.400" height="18" rx=".8" transform="rotate(135 10 10)"/></g><circle cx="10" cy="10" r="2.400" fill="#4d9ad3"/></svg>
<!-- layer scrollbar -->
<div class="a" style="left:1003px;top:243px;width:19px;height:86px;background:#2e2e2e"></div>
<div class="a" style="left:1008px;top:245px;width:0;height:0;border-left:4.500px solid transparent;border-right:4.500px solid transparent;border-bottom:7px solid #9a9a9a"></div>
<div class="a" style="left:1008px;top:320px;width:0;height:0;border-left:4.500px solid transparent;border-right:4.500px solid transparent;border-top:7px solid #9a9a9a"></div>
<div class="a" style="left:1003.500px;top:253px;width:17.500px;height:65px;background:linear-gradient(90deg,#767676,#5a5a5a);border-radius:6px"></div>
<!-- layer buttons -->
<div class="pbtn" style="left:740px;top:333px"><svg width="23" height="23" viewBox="0 0 23 23"><path d="M5.500 4.500h8l4 4v10h-12z" fill="none" stroke="#e6e6e6" stroke-width="1.400"/><path d="M13 4.500v4.500h4.500" fill="none" stroke="#e6e6e6" stroke-width="1.200"/></svg></div>
<div class="pbtn" style="left:767px;top:333px"><svg width="23" height="23" viewBox="0 0 23 23"><path d="M5.500 4.500h8l4 4v10h-12z" fill="none" stroke="#e6e6e6" stroke-width="1.400"/><path d="M13 4.500v4.500h4.500" fill="none" stroke="#e6e6e6" stroke-width="1.200"/><text x="11.300" y="17" font-family="Liberation Sans" font-size="9.500" font-weight="bold" fill="#e6e6e6" text-anchor="middle" dy="-.8">8</text></svg></div>
<div class="pbtn" style="left:794px;top:333px"><svg width="23" height="23" viewBox="0 0 23 23"><path d="M5.500 4.500h8l4 4v10h-12z" fill="none" stroke="#e6e6e6" stroke-width="1.400"/><path d="M13 4.500v4.500h4.500" fill="none" stroke="#e6e6e6" stroke-width="1.200"/><text x="11.300" y="17" font-family="Liberation Sans" font-size="9.500" font-weight="bold" fill="#e6e6e6" text-anchor="middle" dy="-.8">1</text></svg></div>
<div class="pbtn" style="left:821px;top:333px;width:30px"><svg width="30" height="23" viewBox="0 0 30 23"><path d="M13.500 12v-4l-3.500-3.500h-6.500v12.500h5" fill="none" stroke="#e6e6e6" stroke-width="1.300"/><path d="M9.500 4.500v4h4" fill="none" stroke="#e6e6e6" stroke-width="1.100"/><path d="M12.500 13v7M9 16.500h7" stroke="#e6e6e6" stroke-width="1.800" fill="none"/><path d="M19.500 10.500h8l-4 4.500z" fill="#e6e6e6"/></svg></div>
<div class="pbtn" style="left:855px;top:333px"><svg width="23" height="23" viewBox="0 0 23 23"><path d="M3.500 6h6l1.500 2h8.500v10.500h-16z" fill="#e6e6e6"/></svg></div>
<div class="sep" style="left:883px;top:339px;height:11px"></div>
<div class="pbtn" style="left:889px;top:333px"><svg width="23" height="23" viewBox="0 0 23 23"><path d="M8.500 8v-3.500h10v10h-3.500" fill="none" stroke="#e6e6e6" stroke-width="1.300"/><rect x="4.500" y="8.500" width="10" height="10" fill="none" stroke="#e6e6e6" stroke-width="1.300"/></svg></div>
<div class="pbtn" style="left:916px;top:333px;background:#262626;border:1px solid #5c5c5c"><svg style="left:-1px;top:-1px" width="23" height="23" viewBox="0 0 23 23"><path d="M4 4h5v5h-5zM4 14h5v5h-5z" fill="none" stroke="#e6e6e6" stroke-width="1.200"/><path d="M5.500 5.500h2v2h-2zM5.500 15.500h2v2h-2z" fill="#e6e6e6"/><rect x="14" y="9" width="6" height="6" fill="#e6e6e6"/><path d="M9.500 6.500h2.500v10h-2.500M12 11.500h2" fill="none" stroke="#e6e6e6" stroke-width="1.100"/></svg></div>
<div class="sep" style="left:944px;top:339px;height:11px"></div>
<div class="pbtn" style="left:950px;top:333px"><svg width="23" height="23" viewBox="0 0 23 23"><path d="M5.500 8.500h12v10h-12z" fill="none" stroke="#e6e6e6" stroke-width="1.500"/><path d="M4 6.500h15M9 6v-2h5v2" fill="none" stroke="#e6e6e6" stroke-width="1.500"/><path d="M9 10.500v6M11.500 10.500v6M14 10.500v6" stroke="#e6e6e6" stroke-width="1.300" fill="none"/></svg></div>
<!-- Color panel -->
<div class="ph" style="top:367px"><span>Màu</span></div>
<div class="pb" style="top:388px;height:212px"></div>
<svg class="a" style="left:992px;top:370px" width="30" height="14" viewBox="0 0 30 14"><path d="M6 3.500h-3.500v8h8v-3.500" stroke="#d8d8d8" stroke-width="1.200" fill="none"/><path d="M6 8l5-5.500M7.500 2.500h3.500v3.500" stroke="#d8d8d8" stroke-width="1.200" fill="none"/><path d="M19.500 3.500l7 7M26.500 3.500l-7 7" stroke="#e2e2e2" stroke-width="2.600" fill="none"/></svg>
<div class="a" style="left:752px;top:406px;width:19.500px;height:19.500px;background:#fbe9bd"></div>
<div class="a" style="left:742px;top:396px;width:21px;height:20.500px;background:#f54c49;border:2px solid #e00a0a"></div>
<div class="a" style="left:745.300px;top:433px;width:23.500px;height:23.500px;background-color:#fff;background-image:linear-gradient(45deg,#d4d4d4 25%,transparent 25%,transparent 75%,#d4d4d4 75%),linear-gradient(45deg,#d4d4d4 25%,transparent 25%,transparent 75%,#d4d4d4 75%);background-size:12px 12px;background-position:0 0,6px 6px"></div>
<span class="lbl" style="left:742px;top:464px;font-size:9.500px;letter-spacing:0">R:245</span>
<span class="lbl" style="left:742px;top:475px;font-size:9.500px;letter-spacing:0">G:76</span>
<span class="lbl" style="left:742px;top:486px;font-size:9.500px;letter-spacing:0">B:73</span>
<span class="lbl" style="left:742px;top:504px;font-size:9.500px;letter-spacing:0">#F54C49</span>
<div class="pbtn" style="left:744px;top:530px"><svg width="23" height="23" viewBox="0 0 23 23"><path d="M11.500 4c-4.500 0-8 3.300-8 7.500s3.500 7.500 7 7.500c1.500 0 2-1 1.500-2-.7-1.500 0-3 2-3h2.500c2 0 3-1.200 3-3 0-4-3.500-7-8-7z" fill="#e6e6e6"/><circle cx="7" cy="11" r="1.400" fill="#4a4a4a"/><circle cx="9" cy="7.500" r="1.400" fill="#4a4a4a"/><circle cx="13" cy="6.500" r="1.400" fill="#4a4a4a"/><circle cx="16.500" cy="9" r="1.400" fill="#4a4a4a"/></svg></div>
<div class="pbtn" style="left:771px;top:530px"><svg width="23" height="23" viewBox="0 0 23 23"><path d="M10 3.500c-4 0-7 2.800-7 6.500s3 6.500 6 6.500c1.300 0 1.800-.8 1.300-1.800-.6-1.300 0-2.700 1.700-2.700h2.200c1.800 0 2.800-1 2.800-2.500 0-3.500-3-6-7-6z" fill="#e6e6e6"/><circle cx="6" cy="9.500" r="1.200" fill="#4a4a4a"/><circle cx="8" cy="6.500" r="1.200" fill="#4a4a4a"/><circle cx="11.500" cy="5.800" r="1.200" fill="#4a4a4a"/><circle cx="14.300" cy="8" r="1.200" fill="#4a4a4a"/><rect x="11.500" y="13.500" width="9" height="6" fill="#e6e6e6" stroke="#4a4a4a" stroke-width=".8"/><path d="M13 15.500h6M13 17.500h6" stroke="#4a4a4a" stroke-width=".9"/></svg></div>
<!-- wheel -->
<div class="a" style="left:802px;top:390.500px;width:209.500px;height:209.500px;border-radius:50%;background:conic-gradient(from 90deg,#ff0000,#ffff00 60deg,#00ff00 120deg,#00ffff 180deg,#0000ff 240deg,#ff00ff 300deg,#ff0000 360deg)"></div>
<div class="a" style="left:823.700px;top:412px;width:166.500px;height:166.500px;border-radius:50%;background:#272727"></div>
<div class="a" style="left:849px;top:437px;width:117px;height:117px;background:linear-gradient(to bottom,rgba(0,0,0,0),#000),linear-gradient(to right,#fff,#ff0a00)"></div>
<div class="a" style="left:924px;top:436.700px;width:12px;height:12px;border-radius:50%;border:2.500px solid #fff"></div>
<div class="a" style="left:994px;top:489px;width:14px;height:14px;border-radius:50%;border:3px solid #fff;background:#e00018"></div>
<!-- Brush size panel -->
<div class="ph" style="top:607px"><span>Brush Size</span></div>
<div class="pb" style="top:628px;height:77px;background:#232323"></div>
<svg class="a" style="left:992px;top:610px" width="30" height="14" viewBox="0 0 30 14"><path d="M6 3.500h-3.500v8h8v-3.500" stroke="#d8d8d8" stroke-width="1.200" fill="none"/><path d="M6 8l5-5.500M7.500 2.500h3.500v3.500" stroke="#d8d8d8" stroke-width="1.200" fill="none"/><path d="M19.500 3.500l7 7M26.500 3.500l-7 7" stroke="#e2e2e2" stroke-width="2.600" fill="none"/></svg>
<div class="a" style="left:974px;top:629px;width:30px;height:76px;background:#3e3e3e"></div>
<div class="a" style="left:1004px;top:629px;width:20px;height:76px;background:linear-gradient(90deg,#1e1e1e,#2c2c2c)"></div>
<div class="a" style="left:1009px;top:630px;width:0;height:0;border-left:4.500px solid transparent;border-right:4.500px solid transparent;border-bottom:7px solid #9a9a9a"></div>
<div class="a" style="left:1005px;top:639px;width:18px;height:31px;background:linear-gradient(90deg,#808080,#5e5e5e);border-radius:6px"></div>
<style>.bc{position:absolute;width:39px;background:#555}.bc i{position:absolute;background:#f2f2f2;border-radius:50%}.bc b{position:absolute;left:0;width:39px;top:36px;text-align:center;font-size:9.500px;color:#f4f4f4;font-weight:normal}</style>
<div class="bc" style="left:734px;top:629px;height:48px"><i style="left:19px;top:18.500px;width:1px;height:1px;opacity:.35"></i><b>1</b></div>
<div class="bc" style="left:774px;top:629px;height:48px"><i style="left:19px;top:18.300px;width:1.500px;height:1.500px;opacity:.5"></i><b>1.5</b></div>
<div class="bc" style="left:814px;top:629px;height:48px"><i style="left:18.500px;top:18px;width:2px;height:2px;opacity:.9"></i><b>2</b></div>
<div class="bc" style="left:854px;top:629px;height:48px"><i style="left:18px;top:17.500px;width:3px;height:3px"></i><b>3</b></div>
<div class="bc" style="left:894px;top:629px;height:48px"><i style="left:17.500px;top:17px;width:4px;height:4px"></i><b>4</b></div>
<div class="bc" style="left:934px;top:629px;height:48px"><i style="left:17px;top:16.500px;width:5px;height:5px"></i><b>5</b></div>
<div class="bc" style="left:734px;top:679px;height:26px"><i style="left:16px;top:15.500px;width:7px;height:7px"></i></div>
<div class="bc" style="left:774px;top:679px;height:26px"><i style="left:14.500px;top:14px;width:10px;height:10px"></i></div>
<div class="bc" style="left:814px;top:679px;height:26px"><i style="left:13.500px;top:13px;width:12px;height:12px"></i></div>
<div class="bc" style="left:854px;top:679px;height:26px"><i style="left:11px;top:10.500px;width:17px;height:17px"></i></div>
<div class="bc" style="left:894px;top:679px;height:26px"><i style="left:9.500px;top:9px;width:20px;height:20px"></i></div>
<div class="bc" style="left:934px;top:679px;height:26px"><i style="left:7px;top:6.500px;width:25px;height:25px"></i></div>
</body></html>
